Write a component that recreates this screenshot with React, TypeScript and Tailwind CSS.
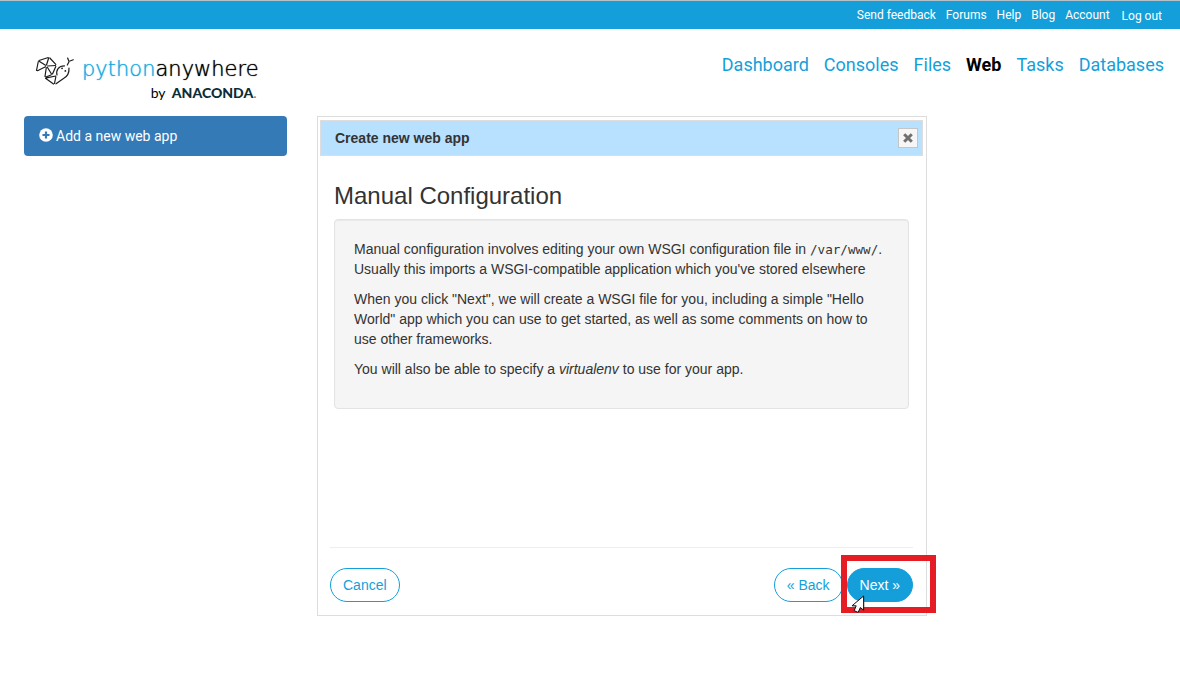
import React from "react";

const accountLinks = ["Send feedback", "Forums", "Help", "Blog", "Account"];
const pages = ["Dashboard", "Consoles", "Files", "Web", "Tasks", "Databases"];

function SnakeMark() {
  return (
    <svg viewBox="0 0 40 30" className="h-[30px] w-10 shrink-0" fill="none" stroke="#1c1c1c" strokeWidth="1.200" strokeLinecap="round" aria-hidden="true">
      <path d="M4 4.500 13.300 1.500M3.300 5.500 1.500 14.500M4.500 5.500 10.500 9.300M2.500 14.700 10.500 10.700M13.500 2.500 11.500 9M14.800 2 20.800 8.300M12.500 10 20.500 9.500" />
      <path d="M11.300 11.500 10 20.500M12.500 11.500 16.500 18M20.800 10.500 17.500 18M10.800 21 16 19M10.500 22.300 18.500 28M11.500 21.800 20.800 20M20.800 21 19.500 27.500" />
      <path d="M22 19C20.800 14 23.500 9.800 29.500 9.800M34 12C34.300 17.500 32.500 20.500 28.500 22.500L21 27.800" />
      <path d="M32.300 9 34 5.700M33.800 5 32.600 2M35 5 38.300 3.800" />
      <path d="M27 12.300h.1M30.300 14.900h.1" strokeWidth="1.700" />
    </svg>
  );
}

function Logo() {
  return (
    <a href="#home" className="flex pt-[27px] font-['Lato',sans-serif]" aria-label="pythonanywhere by ANACONDA">
      <SnakeMark />
      <span className="flex flex-col pl-[7px] pt-px text-black">
        <span className="font-['DejaVu_Sans',sans-serif] text-[21px] font-extralight leading-6 [text-shadow:0_0_1px_currentColor]">
          <span className="text-[#1daae2]">python</span>anywhere
        </span>
        <span className="self-end pr-[2px] text-sm leading-6">
          by <b className="pl-[3px] font-black text-[#0d2c36]">ANACONDA</b>
          <span className="text-[#777]">.</span>
        </span>
      </span>
    </a>
  );
}

function PlusCircle() {
  return (
    <svg viewBox="0 0 14 14" className="mb-[2px] size-[14px]" aria-hidden="true">
      <circle cx="7" cy="7" r="6.800" fill="#fff" />
      <path d="M7 3.500v7M3.500 7h7" stroke="#337ab7" strokeWidth="2.200" />
    </svg>
  );
}

function Pointer() {
  return (
    <svg viewBox="0 0 16 20" className="pointer-events-none absolute left-1 top-[27px] h-5 w-4" aria-hidden="true">
      <path d="M13.500 2 2 11.500l4 .3L4.500 16.500 8 18.500l2.500-5L13.500 16Z" fill="#555" opacity=".4" />
      <path d="M12.600 1 1 10.800h4.200l-2 4.800 3.900 1.800 2.300-4.900 3.200 2.700Z" fill="#fff" stroke="#111" strokeWidth="1" />
    </svg>
  );
}

export default function App() {
  return (
    <div className="bg-white font-['Liberation_Sans',Arial,sans-serif] text-sm text-[#333]">
      <div className="flex h-[29px] items-center justify-end gap-[10px] border-t border-[#b5c3c9] bg-[#149fda] pr-[18px] font-['Roboto',sans-serif] text-xs text-white">
        {accountLinks.map((name) => (
          <a key={name} href="#account">{name}</a>
        ))}
        <button type="button" className="pl-[2px] pt-[2px]">Log out</button>
      </div>

      <header className="flex h-[87px] justify-between pl-[35px] pr-4">
        <Logo />
        <nav className="flex gap-[15px] pt-[22px] font-['Roboto',sans-serif] text-lg text-[#149fda]">
          {pages.map((name) => (
            <a key={name} href="#page" className={name === "Web" ? "font-bold text-black" : ""}>{name}</a>
          ))}
        </nav>
      </header>

      <main className="flex items-start gap-[30px] px-6">
        <aside className="w-[263px] shrink-0">
          <a href="#add" className="flex h-10 items-center gap-[3px] rounded bg-[#337ab7] px-[15px] font-['Roboto',sans-serif] text-white">
            <PlusCircle />
            Add a new web app
          </a>
        </aside>

        <section role="dialog" aria-labelledby="dialog-title" className="flex min-h-[500px] max-w-[610px] flex-1 flex-col border border-[#ddd] pl-[2px] pr-[3px] pt-[3px]">
          <div className="flex h-9 items-center justify-between border border-[#ddd] bg-[#b8e0ff] pl-[14px] pr-1">
            <h1 id="dialog-title" className="font-bold">Create new web app</h1>
            <button type="button" aria-label="Close" className="flex size-5 items-center justify-center border border-[#c5c5c5] bg-[#f6f6f6]">
              <svg viewBox="0 0 10 10" className="size-[10px]" aria-hidden="true">
                <path d="m1.200 1.200 7.600 7.600M8.800 1.200l-7.600 7.600" stroke="#707070" strokeWidth="3" />
              </svg>
            </button>
          </div>

          <div className="flex-1 px-[14px] pt-[26px]">
            <h2 className="mb-[10px] text-2xl leading-[27px]">Manual Configuration</h2>
            <div className="flex flex-col gap-[10px] rounded border border-[#e3e3e3] bg-[#f5f5f5] px-[19px] pb-[29px] pt-[19px] leading-5 shadow-[inset_0_1px_1px_rgba(0,0,0,0.05)]">
              <p>
                Manual configuration involves editing your own WSGI configuration file in{" "}
                <code className="font-['DejaVu_Sans_Mono',monospace] text-[90%] leading-none">/var/www/</code>. Usually this imports a WSGI-compatible application which you've stored elsewhere
              </p>
              <p>
                When you click "Next", we will create a WSGI file for you, including a simple "Hello World" app which you can use to get started, as well as some comments on how to use other frameworks.
              </p>
              <p>You will also be able to specify a <em>virtualenv</em> to use for your app.</p>
            </div>
          </div>

          <footer className="mx-[10px] flex justify-between border-t border-[#eee] pb-[13px] pt-5">
            <button type="button" className="h-[34px] rounded-full border border-[#149fda] bg-white px-3 text-[#149fda]">Cancel</button>
            <div className="flex gap-1">
              <button type="button" className="h-[34px] rounded-full border border-[#149fda] bg-white px-3 text-[#149fda]">« Back</button>
              <div className="relative">
                <button type="button" className="h-[34px] rounded-full border border-[#149fda] bg-[#149fda] px-3 text-white">Next »</button>
                <span className="pointer-events-none absolute -left-[6px] -right-[23px] -top-[13px] h-[58px] border-6 border-[#e51c23]" />
                <Pointer />
              </div>
            </div>
          </footer>
        </section>
      </main>
    </div>
  );
}
